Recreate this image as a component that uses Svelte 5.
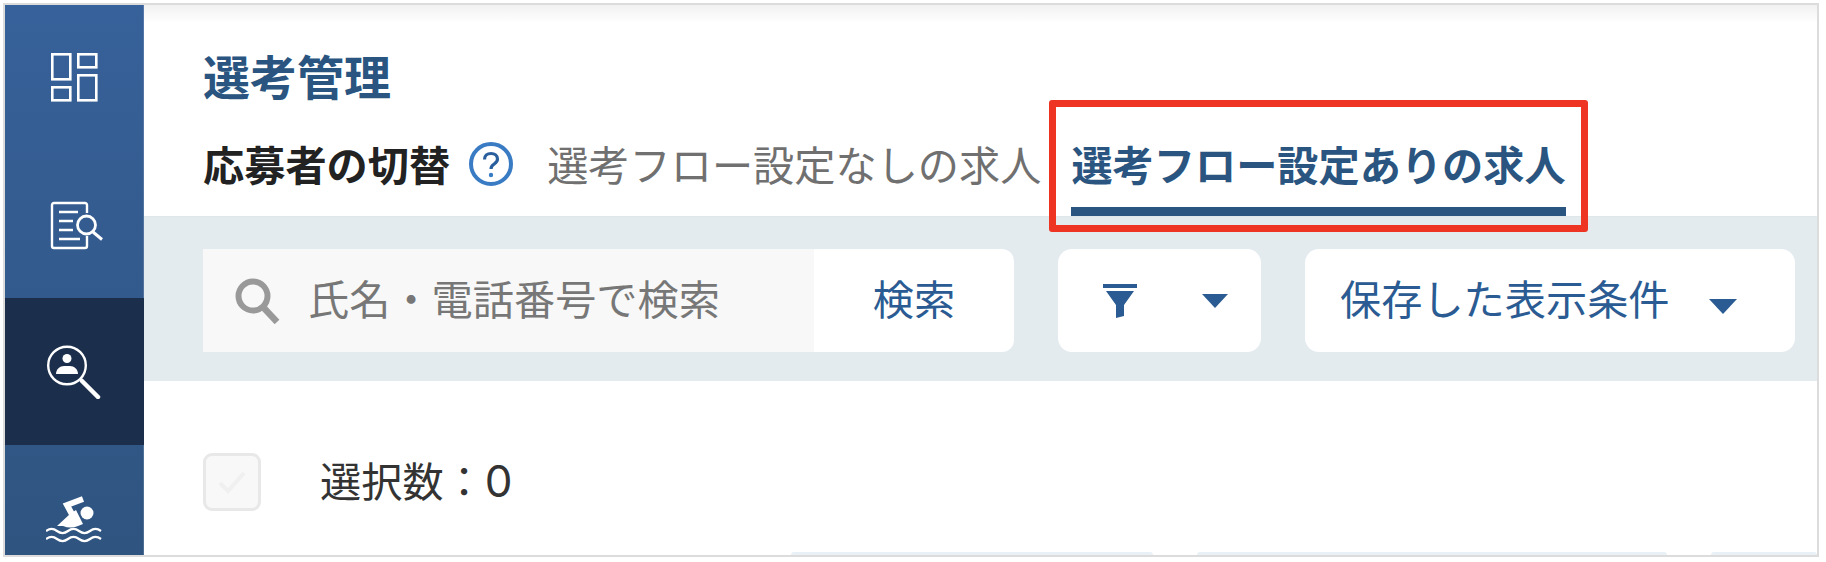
<script>
  const navItems = ["board", "doc", "person", "swim"];
  let selected = 0;
</script>

<div class="frame">
  <nav class="sidebar">
    {#each navItems as item}
      <div class="nav-item" class:current={item === "person"}>
        {#if item === "board"}
          <svg width="48" height="50" viewBox="0 0 48 50" fill="none" stroke="#fff" stroke-width="2.6">
            <rect x="1.3" y="1.3" width="18" height="25" />
            <rect x="27.3" y="1.3" width="18" height="13" />
            <rect x="1.3" y="34.3" width="18" height="13" />
            <rect x="27.3" y="22.3" width="18" height="25" />
          </svg>
        {:else if item === "doc"}
          <svg width="56" height="50" viewBox="0 0 56 50" fill="none" stroke="#fff" stroke-width="2.4">
            <path d="M40 13V5a2 2 0 0 0-2-2H7a2 2 0 0 0-2 2v41a2 2 0 0 0 2 2h31a2 2 0 0 0 2-2V36" />
            <path d="M12 12h19M12 21h14M12 30h14M12 39h21" />
            <circle cx="39.500" cy="25" r="9" stroke-width="2.800" />
            <path d="M46 32l9 7.500" stroke-width="3" />
          </svg>
        {:else if item === "person"}
          <svg width="56" height="56" viewBox="0 0 56 56" fill="none" stroke="#fff">
            <circle cx="20" cy="22.500" r="18.800" stroke-width="2.400" />
            <circle cx="20" cy="15.500" r="4.500" fill="#fff" stroke="none" />
            <path d="M9 31c0-5 4-8 8-8h6c4 0 8 3 8 8z" fill="#fff" stroke="none" />
            <path d="M35 38l16 16" stroke-width="4.500" stroke-linecap="round" />
          </svg>
        {:else}
          <svg width="58" height="50" viewBox="0 0 58 50" fill="#fff">
            <circle cx="41" cy="20" r="6.500" />
            <path d="M37 6L21 12l7 13" fill="none" stroke="#fff" stroke-width="6" />
            <path d="M24 21L11 33h6c5 2 10 2 15 0l5-2-7-14z" />
            <path d="M0 38c4-3 7-3 11 0s7 3 11 0 7-3 11 0 7 3 11 0 7-3 11 0" fill="none" stroke="#fff" stroke-width="2.200" />
            <path d="M0 46c4-3 7-3 11 0s7 3 11 0 7-3 11 0 7 3 11 0 7-3 11 0" fill="none" stroke="#fff" stroke-width="2.200" />
          </svg>
        {/if}
      </div>
    {/each}
  </nav>

  <main class="content">
    <header class="head">
      <h1>選考管理</h1>
      <div class="tabs">
        <span class="tabs-label">応募者の切替</span>
        <svg class="help" width="44" height="44" viewBox="0 0 44 44" fill="none">
          <circle cx="22" cy="22" r="20" stroke="#3a7cc4" stroke-width="4" />
          <path d="M15.500 17.500c0-3.800 2.800-6 6.500-6s6.500 2.200 6.500 5.500c0 2.800-1.700 3.900-3.300 5-1.700 1.100-3.200 2.300-3.200 5" stroke="#2a5f9e" stroke-width="3.200" />
          <circle cx="22" cy="33" r="2.200" fill="#3a7cc4" />
        </svg>
        <span class="tab">選考フロー設定なしの求人</span>
        <span class="tab active">
          選考フロー設定ありの求人
          <span class="highlight"></span>
        </span>
      </div>
    </header>

    <section class="toolbar">
      <div class="search">
        <div class="search-input">
          <svg width="46" height="46" viewBox="0 0 46 46" fill="none" stroke="#999">
            <circle cx="18" cy="18" r="14.500" stroke-width="6" />
            <path d="M28 29l14 15" stroke-width="6.500" />
          </svg>
          <span class="label">氏名・電話番号で検索</span>
        </div>
        <button class="search-btn"><span class="label">検索</span></button>
      </div>
      <button class="btn filter">
        <svg width="34" height="34" viewBox="0 0 34 34" fill="#2a5b92">
          <rect x="0" y="0" width="34" height="4" />
          <path d="M3 7h28L21 21v11l-8 2V21z" />
        </svg>
        <i class="caret small"></i>
      </button>
      <button class="btn saved">
        <span class="label">保存した表示条件</span>
        <i class="caret"></i>
      </button>
    </section>

    <section class="selection">
      <span class="check" class:on={selected > 0}>
        <svg width="30" height="24" viewBox="0 0 30 24" fill="none" stroke="#f0f0f0" stroke-width="4">
          <path d="M3 13l8 8L27 3" />
        </svg>
      </span>
      <span class="count">選択数：<span class="num">{selected}</span></span>
    </section>

    <div class="cols">
      <span style="width: 362px"></span>
      <span style="width: 471px"></span>
      <span style="width: 106px"></span>
    </div>
  </main>
</div>

<style>
  :global(body) {
    background: #fff;
  }

  .frame {
    display: flex;
    box-sizing: border-box;
    width: 1816px;
    height: 554px;
    margin: 3px 0 0 3px;
    border: 2px solid #dcdcdc;
    overflow: hidden;
    font-family: "Noto Sans CJK JP", "Noto Sans", sans-serif;
  }

  .sidebar {
    flex: 0 0 139px;
    box-sizing: border-box;
    background: linear-gradient(#37619a, #2f5480);
    box-shadow: inset -1px 0 rgba(255, 255, 255, 0.15);
    display: flex;
    flex-direction: column;
  }

  .nav-item {
    flex: 0 0 146.5px;
    display: flex;
    align-items: center;
    justify-content: center;
  }

  .nav-item.current {
    background: #1b2f4c;
  }

  .content {
    flex: 1;
    min-width: 0;
    display: flex;
    flex-direction: column;
    background: #fff;
  }

  .head {
    padding: 40px 0 0 59px;
    height: 211px;
    box-sizing: border-box;
    background: linear-gradient(#f1f1f1, #fff 18px);
  }

  h1 {
    margin: 0;
    font-size: 47px;
    line-height: 60px;
    font-weight: 700;
    color: #2a5580;
  }

  .tabs {
    display: flex;
    align-items: flex-start;
    margin-top: 28px;
    font-size: 41.2px;
    line-height: 60px;
  }

  .tabs-label {
    font-weight: 700;
    color: #222;
  }

  .help {
    margin: 9px 34px 0 19px;
  }

  .tab {
    color: #707070;
    white-space: nowrap;
  }

  .active {
    position: relative;
    margin-left: 30px;
    height: 74px;
    border-bottom: 9px solid #2a5580;
    color: #2a5580;
    font-weight: 700;
  }

  .highlight {
    position: absolute;
    left: -22px;
    right: -22px;
    top: -33px;
    bottom: -25px;
    border: 7px solid #ee3524;
    border-radius: 3px;
  }

  .toolbar {
    display: flex;
    height: 165px;
    box-sizing: border-box;
    padding: 32px 0 0 59px;
    background: #e4ebef;
    border-top: 1px solid #e0e6ea;
  }

  .label {
    margin-bottom: 7px;
    display: block;
  }

  .search {
    display: flex;
    width: 811px;
    height: 103px;
    border-radius: 0 12px 12px 0;
    overflow: hidden;
  }

  .search-input {
    flex: 0 0 611px;
    display: flex;
    align-items: center;
    gap: 27px;
    padding-left: 32px;
    box-sizing: border-box;
    background: #f8f8f8;
    color: #777;
    font-size: 41.2px;
  }

  .search-btn {
    flex: 1;
    border: none;
    background: #fff;
    color: #2a5b92;
    font: inherit;
    font-size: 41.2px;
  }

  .btn {
    display: flex;
    align-items: center;
    height: 103px;
    border: none;
    border-radius: 14px;
    background: #fff;
    color: #2a5b92;
    font: inherit;
    font-size: 41.2px;
    padding: 0;
  }

  .filter {
    width: 203px;
    margin-left: 44px;
    padding-left: 45px;
    gap: 65px;
  }

  .saved {
    width: 490px;
    margin-left: 44px;
    padding-left: 35px;
    gap: 39px;
  }

  .caret {
    width: 0;
    height: 0;
    border-left: 14px solid transparent;
    border-right: 14px solid transparent;
    border-top: 15px solid #2a5b92;
    margin-top: 12px;
  }

  .caret.small {
    border-left-width: 13px;
    border-right-width: 13px;
    border-top-width: 14px;
    margin-top: 0;
  }

  .selection {
    display: flex;
    align-items: center;
    height: 171px;
    box-sizing: border-box;
    padding: 30px 0 0 59px;
  }

  .check {
    width: 58px;
    height: 58px;
    box-sizing: border-box;
    display: flex;
    align-items: center;
    justify-content: center;
    background: #f8f8f8;
    border: 3px solid #e8e8e8;
    border-radius: 9px;
  }

  .count {
    margin: 0 0 5px 59px;
    font-size: 41.2px;
    color: #333;
  }

  .num {
    font-family: Inter, sans-serif;
    font-size: 44px;
  }

  .cols {
    display: flex;
    gap: 44px;
    margin-left: 647px;
    height: 3px;
  }

  .cols span {
    background: #e9f1f6;
    border-radius: 3px 3px 0 0;
  }
</style>
